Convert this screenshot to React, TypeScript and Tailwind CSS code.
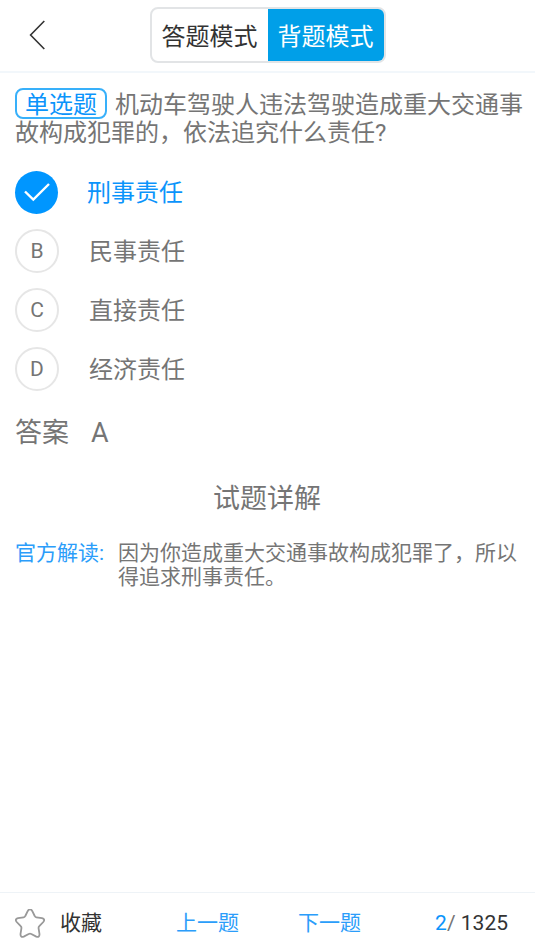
import { useState } from "react";

const options = [
  { id: "A", text: "刑事责任" },
  { id: "B", text: "民事责任" },
  { id: "C", text: "直接责任" },
  { id: "D", text: "经济责任" },
];

function Header() {
  return (
    <header className="grid h-[73px] grid-cols-[1fr_auto_1fr] items-center border-b-2 border-[#f2f7fb] pb-px">
      <button type="button" aria-label="返回" className="ml-6 justify-self-start p-1 text-[#333]">
        <svg width="18" height="30" viewBox="0 0 18 30" fill="none" stroke="currentColor" strokeWidth="1.6">
          <path d="M16.3 1 2.6 15l13.7 14" />
        </svg>
      </button>
      <div className="flex h-14 overflow-hidden rounded-lg border-2 border-[#e2e4e6] text-2xl">
        <button type="button" className="px-2.5 pt-1 text-[#333]">
          答题模式
        </button>
        <button type="button" aria-pressed="true" className="bg-[#009fe8] px-2.5 pt-1 text-white">
          背题模式
        </button>
      </div>
    </header>
  );
}

function Option({
  id,
  text,
  checked,
  onSelect,
}: {
  id: string;
  text: string;
  checked: boolean;
  onSelect: () => void;
}) {
  return (
    <label className={`flex items-center text-2xl ${checked ? "gap-[29px] text-[#0b94fb]" : "gap-[30px]"}`}>
      <span className="grid h-11 place-items-center">
        <input
          type="radio"
          name="answer"
          value={id}
          checked={checked}
          onChange={onSelect}
          className="col-start-1 row-start-1 size-11 appearance-none rounded-full border-2 border-[#e6e6e6] checked:size-[43px] checked:border-0 checked:bg-[#0096ff]"
        />
        {checked ? (
          <svg
            className="pointer-events-none col-start-1 row-start-1"
            width="26"
            height="20"
            viewBox="0 0 26 20"
            fill="none"
            stroke="white"
            strokeWidth="2.4"
          >
            <path d="M1 9.5 9.3 17.6 25 2" />
          </svg>
        ) : (
          <span className="pointer-events-none col-start-1 row-start-1 text-[21px]">{id}</span>
        )}
      </span>
      <span className="pt-0.5">{text}</span>
    </label>
  );
}

export default function App() {
  const [answer, setAnswer] = useState("A");
  return (
    <div className="flex min-h-screen flex-col bg-white font-['Roboto','Noto_Sans_CJK_SC',sans-serif] text-[#757575]">
      <Header />
      <main className="flex-1 pt-[18px] pr-2 pl-[15px]">
        <p className="text-2xl leading-7">
          <span className="-mt-[3px] mr-2 inline-block rounded-lg border-2 border-[#38b0fa] px-2 pt-[3px] leading-6 text-[#0b94fb]">
            单选题
          </span>
          机动车驾驶人违法驾驶造成重大交通事故构成犯罪的，依法追究什么责任?
        </p>
        <div role="radiogroup" aria-label="选项" className="mt-[23px] flex flex-col gap-[15px]">
          {options.map((o) => (
            <Option key={o.id} {...o} checked={answer === o.id} onSelect={() => setAnswer(o.id)} />
          ))}
        </div>
        <p className="mt-6 flex gap-[22px] text-[27px] leading-9">
          <span>答案</span>
          <span>A</span>
        </p>
        <h2 className="mt-[30px] pr-2 text-center text-[27px] leading-9">试题详解</h2>
        <div className="mt-6 flex text-[21px] leading-6">
          <span className="w-[103px] shrink-0 text-[#2b9dfa]">官方解读:</span>
          <p>因为你造成重大交通事故构成犯罪了，所以得追求刑事责任。</p>
        </div>
      </main>
      <footer className="flex h-[59px] items-center justify-between border-t border-[#eef3f7] pt-1 pr-[27px] pl-[15px] text-[21px]">
        <button type="button" className="flex items-center gap-[15px] text-[#333]">
          <svg width="30" height="30" viewBox="0 0 30 30" fill="none" stroke="#999" strokeWidth="1.8" strokeLinejoin="round">
            <path d="M12.8 1.900q2.200-3.200 4.400 0l2.500 5.100q.5 1.100 1.700 1.300l5.600.9q3.600 1 1.300 3.800l-4 4.200q-.9.900-.7 2.100l.9 5.800q.1 3.600-3.200 2.500l-5-2.600q-1.300-.6-2.600 0l-5 2.600q-3.300 1.100-3.200-2.500l.9-5.800q.2-1.200-.7-2.100l-4-4.200q-2.300-2.800 1.300-3.800l5.600-.9q1.200-.2 1.700-1.300Z" />
          </svg>
          收藏
        </button>
        <nav className="flex gap-[59px] text-[#2b9dfa]">
          <button type="button">上一题</button>
          <button type="button">下一题</button>
        </nav>
        <span className="text-[#333]">
          <span className="text-[#0b94fb]">2</span>
          <span className="text-[#757575]">/</span> 1325
        </span>
      </footer>
    </div>
  );
}
